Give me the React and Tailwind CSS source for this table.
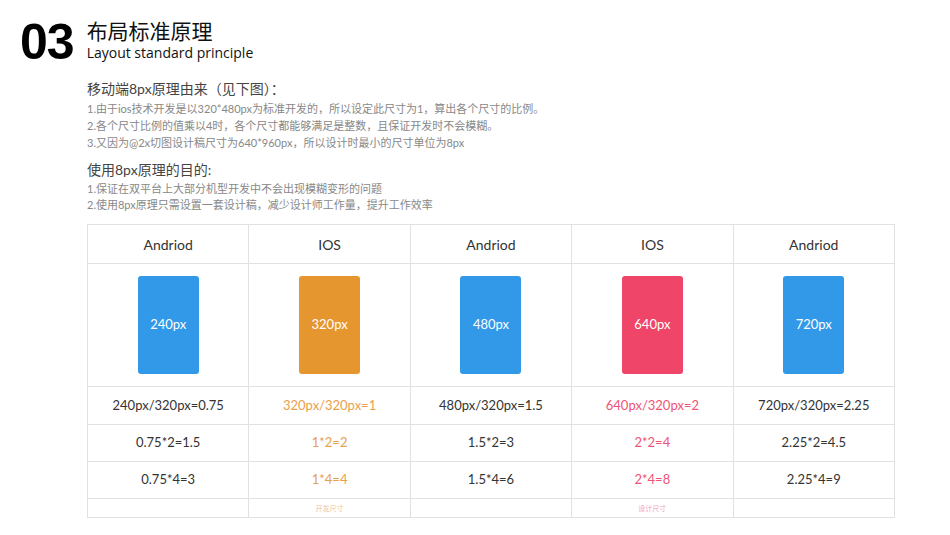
import React from 'react';

const cols = [
  { os: 'Andriod', size: '240px', box: 'bg-[#3199e8]', text: 'text-[#333]', ratio: '240px/320px=0.75', x2: '0.75*2=1.5', x4: '0.75*4=3', note: '' },
  { os: 'IOS', size: '320px', box: 'bg-[#e5962f]', text: 'text-[#e9a04c]', ratio: '320px/320px=1', x2: '1*2=2', x4: '1*4=4', note: '开发尺寸' },
  { os: 'Andriod', size: '480px', box: 'bg-[#3199e8]', text: 'text-[#333]', ratio: '480px/320px=1.5', x2: '1.5*2=3', x4: '1.5*4=6', note: '' },
  { os: 'IOS', size: '640px', box: 'bg-[#ee4569]', text: 'text-[#ee5477]', ratio: '640px/320px=2', x2: '2*2=4', x4: '2*4=8', note: '设计尺寸' },
  { os: 'Andriod', size: '720px', box: 'bg-[#3199e8]', text: 'text-[#333]', ratio: '720px/320px=2.25', x2: '2.25*2=4.5', x4: '2.25*4=9', note: '' },
];

const cell = 'border border-[#e2e2e2] text-center align-middle';
const font = { fontFamily: '"Lato", "Noto Sans CJK SC", sans-serif' };

const App = () => {
  return (
    <div className="w-[950px] h-[535px] bg-white overflow-hidden relative" style={font}>
      <div className="flex items-start pt-[16px] pl-[20px]">
        <div className="text-[50px] leading-[50px] font-bold text-black mt-[1px] tracking-[-1px]" style={{ fontFamily: '"Liberation Sans", Arial, sans-serif' }}>03</div>
        <div className="ml-[13px] flex flex-col">
          <div className="text-[21px] leading-[28px] text-[#111]" style={{ fontFamily: '"Noto Sans CJK SC", sans-serif' }}>布局标准原理</div>
          <div className="text-[14px] leading-[20px] text-[#111] -mt-[1px]" style={{ fontFamily: '"Open Sans", sans-serif' }}>Layout standard principle</div>
        </div>
      </div>

      <div className="ml-[87px] mt-[13px] text-[#555]">
        <div className="text-[14px] leading-[18px] text-[#444]">移动端8px原理由来（见下图）：</div>
        <div className="mt-[2px] text-[11px] leading-[17px] text-[#888]">
          <div>1.由于ios技术开发是以320*480px为标准开发的，所以设定此尺寸为1，算出各个尺寸的比例。</div>
          <div>2.各个尺寸比例的值乘以4时，各个尺寸都能够满足是整数，且保证开发时不会模糊。</div>
          <div>3.又因为@2x切图设计稿尺寸为640*960px，所以设计时最小的尺寸单位为8px</div>
        </div>
        <div className="mt-[10px] text-[14px] leading-[18px] text-[#444]">使用8px原理的目的:</div>
        <div className="mt-[2px] text-[11px] leading-[16px] text-[#888]">
          <div>1.保证在双平台上大部分机型开发中不会出现模糊变形的问题</div>
          <div>2.使用8px原理只需设置一套设计稿，减少设计师工作量，提升工作效率</div>
        </div>
      </div>

      <table className="ml-[87px] mt-[11px] w-[808px] border-collapse table-fixed">
        <tbody>
          <tr className="h-[39px]">
            {cols.map((c, i) => (
              <td key={i} className={`${cell} text-[14px] text-[#333]`}>{c.os}</td>
            ))}
          </tr>
          <tr className="h-[123px]">
            {cols.map((c, i) => (
              <td key={i} className={cell}>
                <div className={`mx-auto w-[61px] h-[98px] rounded-[3px] flex items-center justify-center text-white text-[13px] ${c.box}`}>{c.size}</div>
              </td>
            ))}
          </tr>
          <tr className="h-[38px]">
            {cols.map((c, i) => (
              <td key={i} className={`${cell} text-[13px] ${c.text}`}>{c.ratio}</td>
            ))}
          </tr>
          <tr className="h-[37px]">
            {cols.map((c, i) => (
              <td key={i} className={`${cell} text-[13px] ${c.text}`}>{c.x2}</td>
            ))}
          </tr>
          <tr className="h-[37px]">
            {cols.map((c, i) => (
              <td key={i} className={`${cell} text-[13px] ${c.text}`}>{c.x4}</td>
            ))}
          </tr>
          <tr className="h-[19px]">
            {cols.map((c, i) => (
              <td key={i} className={`${cell} text-[7px] leading-[10px] ${i === 1 ? 'text-[#f0c99a]' : 'text-[#f3a3b6]'}`}>{c.note}</td>
            ))}
          </tr>
        </tbody>
      </table>
    </div>
  );
};

export default App;
